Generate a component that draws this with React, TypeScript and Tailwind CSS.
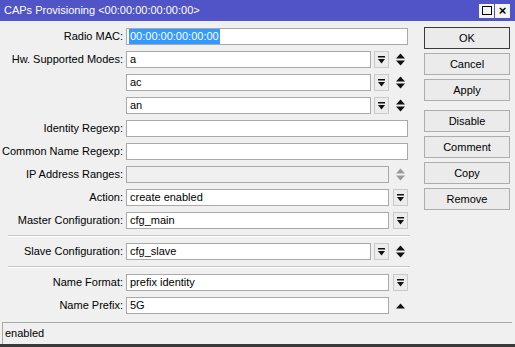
import React from "react";

const font = { fontFamily: '"Liberation Sans", Arial, sans-serif' };

function DropIcon() {
  return (
    <svg width="7" height="8" viewBox="0 0 7 8">
      <rect x="0" y="0" width="7" height="1.5" fill="#111" />
      <path d="M0 3 L7 3 L3.5 7.5 Z" fill="#111" />
    </svg>
  );
}

function DropBtn() {
  return (
    <div className="flex h-[17px] w-[15px] shrink-0 items-center justify-center border border-[#c9c9c9] bg-[#ececec]">
      <DropIcon />
    </div>
  );
}

function UpDown({ gray = false }: { gray?: boolean }) {
  const c = gray ? "#9a9a9a" : "#111";
  return (
    <svg width="9" height="13" viewBox="0 0 9 13">
      <path d="M0 5.5 L9 5.5 L4.5 0.5 Z" fill={c} />
      <path d="M0 7.5 L9 7.5 L4.5 12.5 Z" fill={c} />
    </svg>
  );
}

function UpOnly() {
  return (
    <svg width="9" height="6" viewBox="0 0 9 6">
      <path d="M0 5.5 L9 5.5 L4.5 0.5 Z" fill="#111" />
    </svg>
  );
}

function Field({
  value = "",
  disabled = false,
  selected = false,
}: {
  value?: string;
  disabled?: boolean;
  selected?: boolean;
}) {
  return (
    <div
      className={`flex h-[17px] min-w-0 flex-1 items-center border border-[#a9a9a9] pl-[2px] text-[11px] leading-none text-black ${
        disabled ? "bg-[#f0f0f0]" : "bg-white"
      }`}
    >
      {selected ? (
        <span className="bg-[#3399ff] px-[1px] py-[2px] text-white">{value}</span>
      ) : (
        <span className="pl-[1px]">{value}</span>
      )}
    </div>
  );
}

type Side = "none" | "drop" | "updown" | "updown-gray" | "up";

function Row({
  label,
  value,
  inner,
  side = "none",
  full = false,
  disabled,
  selected,
}: {
  label?: string;
  value?: string;
  inner?: boolean;
  side?: Side;
  full?: boolean;
  disabled?: boolean;
  selected?: boolean;
}) {
  return (
    <div className="mb-[6px] flex h-[17px] items-center">
      <div className="flex w-[123px] shrink-0 justify-end whitespace-nowrap text-[11px] text-black">
        {label ? `${label}:` : ""}
      </div>
      <div className={`ml-[3px] flex gap-[3px] ${full ? "w-[282px]" : "w-[263px]"}`}>
        <Field value={value} disabled={disabled} selected={selected} />
        {inner && <DropBtn />}
      </div>
      {!full && (
        <div className="ml-[3px] flex w-[16px] items-center justify-center">
          {side === "drop" && <DropBtn />}
          {side === "updown" && <UpDown />}
          {side === "updown-gray" && <UpDown gray />}
          {side === "up" && <UpOnly />}
        </div>
      )}
    </div>
  );
}

function Sep() {
  return <div className="mb-[7px] ml-[8px] h-px w-[402px] bg-[#c4c4c4] shadow-[0_1px_0_#ffffff]" />;
}

function Btn({ label, primary = false, className = "" }: { label: string; primary?: boolean; className?: string }) {
  return (
    <div
      className={`flex h-[22px] w-[86px] items-center justify-center border bg-[#ebebeb] text-[11px] text-black ${
        primary ? "border-[#3a3a3a]" : "border-[#adadad]"
      } ${className}`}
    >
      {label}
    </div>
  );
}

export default function App() {
  return (
    <div className="flex h-[347px] w-[515px] flex-col overflow-hidden bg-[#f0f0f0]" style={font}>
      <div className="flex h-[21px] shrink-0 items-center justify-between bg-[#5054c6] pl-[4px] pr-[5px]">
        <span className="text-[11px] text-white">CAPs Provisioning &lt;00:00:00:00:00:00&gt;</span>
        <div className="flex gap-[1px]">
          <div className="flex h-[14px] w-[15px] items-center justify-center bg-[#f4f4f4]">
            <div className="h-[9px] w-[10px] border-[1.5px] border-black" />
          </div>
          <div className="flex h-[14px] w-[15px] items-center justify-center bg-[#f4f4f4] text-[13px] font-bold leading-none text-black">
            ×
          </div>
        </div>
      </div>

      <div className="flex flex-1 pt-[7px]">
        <div className="w-[420px]">
          <Row label="Radio MAC" value="00:00:00:00:00:00" full selected />
          <Row label="Hw. Supported Modes" value="a" inner side="updown" />
          <Row value="ac" inner side="updown" />
          <Row value="an" inner side="updown" />
          <Row label="Identity Regexp" full />
          <Row label="Common Name Regexp" full />
          <Row label="IP Address Ranges" disabled side="updown-gray" />
          <Row label="Action" value="create enabled" side="drop" />
          <Row label="Master Configuration" value="cfg_main" side="drop" />
          <Sep />
          <Row label="Slave Configuration" value="cfg_slave" inner side="updown" />
          <Sep />
          <Row label="Name Format" value="prefix identity" side="drop" />
          <Row label="Name Prefix" value="5G" side="up" />
        </div>
        <div className="ml-[4px] flex flex-col gap-[4px]">
          <Btn label="OK" primary className="-mt-[1px]" />
          <Btn label="Cancel" />
          <Btn label="Apply" />
          <Btn label="Disable" className="mt-[5px]" />
          <Btn label="Comment" />
          <Btn label="Copy" />
          <Btn label="Remove" />
        </div>
      </div>

      <div className="ml-[2px] mr-[3px] flex h-[22px] shrink-0 items-center border-t border-l border-[#a8a8a8] pl-[2px] text-[11px] text-black">
        enabled
      </div>
      <div className="h-[3px] shrink-0 bg-[#3a3a3a]" />
    </div>
  );
}
